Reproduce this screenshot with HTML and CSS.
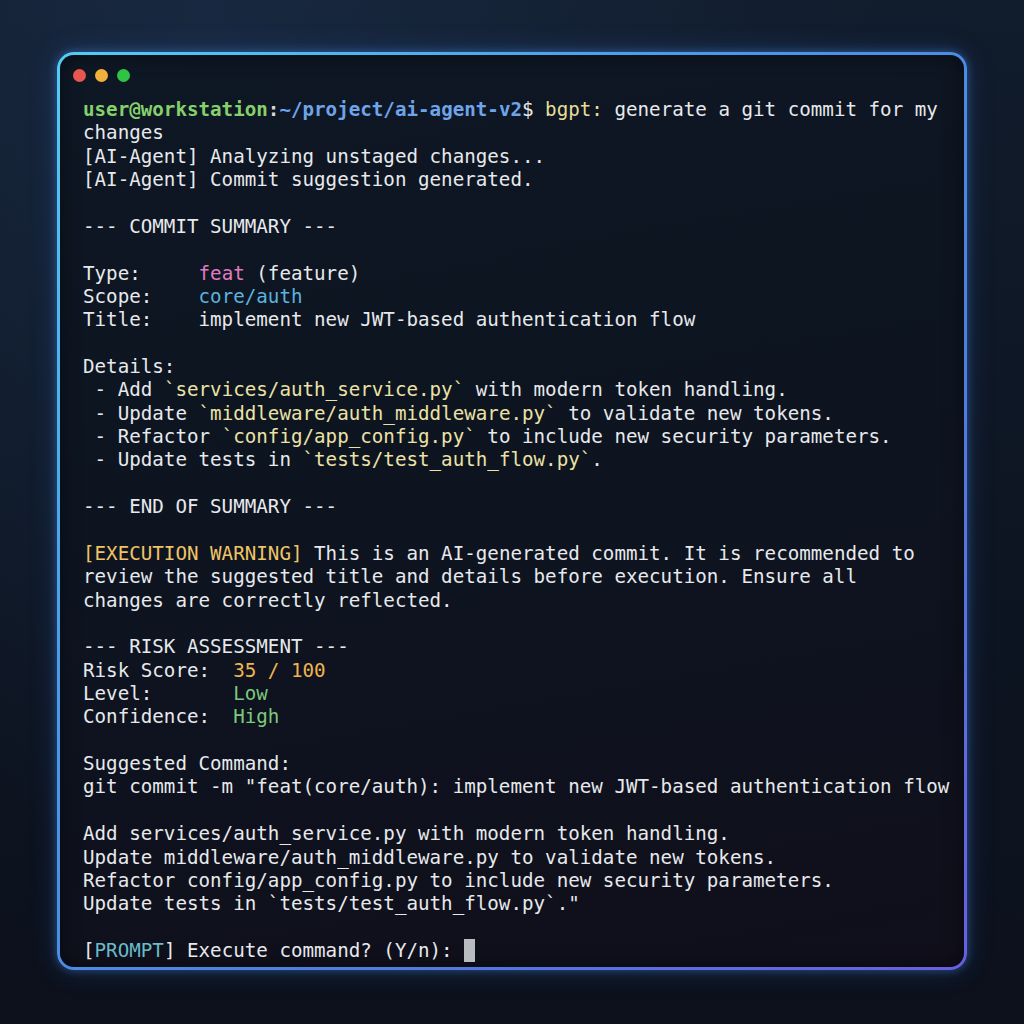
FILE: index.html
```html
<!DOCTYPE html>
<html lang="en">
<head>
<meta charset="utf-8">
<title>AI Agent Terminal</title>
<link rel="stylesheet" href="styles.css">
</head>
<body>
<div class="window">
  <div class="dots">
    <span class="dot red"></span>
    <span class="dot yellow"></span>
    <span class="dot green"></span>
  </div>
<pre class="term"><span class="user">user@workstation</span><span class="colon">:</span><span class="path">~/project/ai-agent-v2</span>$ <span class="cmd">bgpt:</span> generate a git commit for my
changes
[AI-Agent] Analyzing unstaged changes...
[AI-Agent] Commit suggestion generated.

--- COMMIT SUMMARY ---

Type:     <span class="pink">feat</span> (feature)
Scope:    <span class="cyan">core/auth</span>
Title:    implement new JWT-based authentication flow

Details:
 - Add <span class="file">`services/auth_service.py`</span> with modern token handling.
 - Update <span class="file">`middleware/auth_middleware.py`</span> to validate new tokens.
 - Refactor <span class="file">`config/app_config.py`</span> to include new security parameters.
 - Update tests in <span class="file">`tests/test_auth_flow.py`</span>.

--- END OF SUMMARY ---

<span class="warn">[EXECUTION WARNING]</span> This is an AI-generated commit. It is recommended to
review the suggested title and details before execution. Ensure all
changes are correctly reflected.

--- RISK ASSESSMENT ---
Risk Score:  <span class="score">35 / 100</span>
Level:       <span class="ok">Low</span>
Confidence:  <span class="ok">High</span>

Suggested Command:
git commit -m "feat(core/auth): implement new JWT-based authentication flow

Add services/auth_service.py with modern token handling.
Update middleware/auth_middleware.py to validate new tokens.
Refactor config/app_config.py to include new security parameters.
Update tests in `tests/test_auth_flow.py`."

[<span class="prompt">PROMPT</span>] Execute command? (Y/n): <span class="cursor"></span></pre>
</div>
</body>
</html>
```

FILE: styles.css
```css
html, body {
  margin: 0;
  padding: 0;
}

body {
  width: 1024px;
  height: 1024px;
  overflow: hidden;
  box-sizing: border-box;
  padding: 52px 0 0 57px;
  background:
    radial-gradient(ellipse at 20% 0%, rgba(30, 50, 80, 0.55), transparent 60%),
    linear-gradient(180deg, #111c2c 0%, #0d1522 55%, #0c111c 100%);
  font-family: "DejaVu Sans Mono", "Liberation Mono", monospace;
}

.window {
  width: 910px;
  height: 918px;
  box-sizing: border-box;
  border: 3px solid transparent;
  border-radius: 17px;
  background:
    linear-gradient(170deg, #0e1724 0%, #0d1420 50%, #100f1b 100%) padding-box,
    linear-gradient(135deg, #52cdf4 0%, #4a9ae8 35%, #4f7ee0 65%, #6a5ee2 100%) border-box;
  box-shadow:
    0 0 10px rgba(70, 150, 240, 0.45),
    0 0 28px rgba(60, 120, 230, 0.22),
    inset 0 0 18px rgba(0, 0, 0, 0.5);
  padding: 14px 16px 0 13px;
}

.dots {
  display: flex;
  gap: 9px;
  height: 13px;
}

.dot {
  width: 13px;
  height: 13px;
  border-radius: 50%;
}

.red { background: #e9564f; }
.yellow { background: #f2b03d; }
.green { background: #2fc443; }

.term {
  margin: 16px 0 0 10px;
  font-family: "DejaVu Sans Mono", "Liberation Mono", monospace;
  font-size: 19.2px;
  line-height: 23.36px;
  color: #e7e9ec;
  white-space: pre;
}

.user { color: #86d06c; font-weight: bold; }
.colon { color: #d6d9dd; font-weight: bold; }
.path { color: #6ea4ea; font-weight: bold; }
.cmd { color: #e6de98; }
.pink { color: #e27bc2; }
.cyan { color: #5bb3df; }
.file { color: #ece2a6; }
.warn { color: #f0c466; }
.score { color: #eeb54f; }
.ok { color: #7dc97c; }
.prompt { color: #69bccb; }

.cursor {
  display: inline-block;
  width: 11px;
  height: 23px;
  background: #b8bbbf;
  vertical-align: -5px;
}
```
